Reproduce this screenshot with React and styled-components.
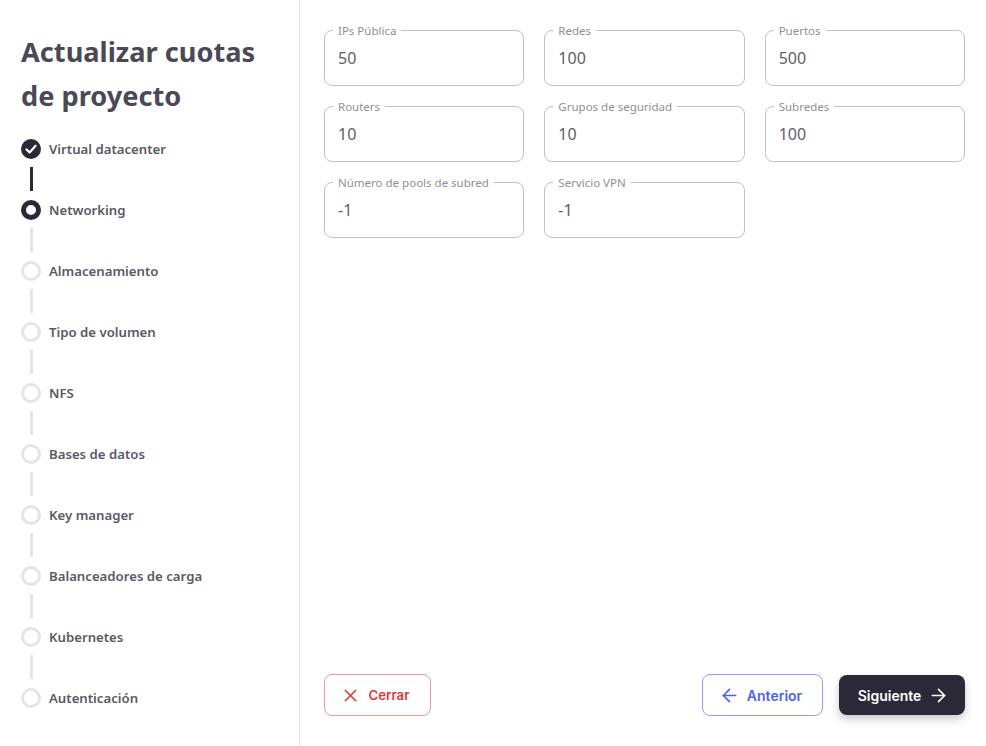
import React from "react";
import styled, { createGlobalStyle } from "styled-components";
import { ArrowLeft, ArrowRight, X } from "lucide-react";

const GlobalStyle = createGlobalStyle`
  html, body {
    margin: 0;
    padding: 0;
    background: #fff;
    font-family: "Noto Sans", sans-serif;
  }
  * {
    box-sizing: border-box;
  }
`;

const Page = styled.div`
  display: flex;
  width: 986px;
  height: 746px;
  overflow: hidden;
`;

const Sidebar = styled.aside`
  width: 300px;
  flex-shrink: 0;
  padding: 30px 0 0 21px;
  border-right: 1px solid #e5e5e7;
`;

const Title = styled.h1`
  margin: 0 0 21px;
  width: 260px;
  font-size: 27.2px;
  line-height: 44px;
  font-weight: 700;
  color: #4a4955;
`;

const StepList = styled.div`
  display: flex;
  flex-direction: column;
`;

const Step = styled.div`
  display: flex;
  align-items: center;
  gap: 8px;
  height: 20px;
  font-size: 13.2px;
  font-weight: 600;
  color: #5a5964;
`;

const Circle = styled.span`
  display: flex;
  align-items: center;
  justify-content: center;
  width: 20px;
  height: 20px;
  border-radius: 50%;
  background: ${({ $state }) => ($state === "done" ? "#2b2937" : "#fff")};
  border: ${({ $state }) =>
    $state === "active"
      ? "5px solid #2b2937"
      : $state === "done"
        ? "none"
        : "3px solid #e5e5e7"};
`;

const Connector = styled.span`
  width: 3px;
  height: 24px;
  margin: 8px 0 9px 9px;
  background: ${({ $done }) => ($done ? "#2b2937" : "#e5e5e7")};
`;

const Main = styled.main`
  flex: 1;
  display: flex;
  flex-direction: column;
  justify-content: space-between;
  padding: 24px 21px 30px 24px;
`;

const FieldGrid = styled.div`
  display: grid;
  grid-template-columns: repeat(3, 1fr);
  gap: 14px 20px;
`;

const Field = styled.fieldset`
  height: 62px;
  margin: 0;
  padding: 0 13px;
  border: 1px solid #c2c2c6;
  border-radius: 8px;
  min-width: 0;
`;

const FieldLabel = styled.legend`
  height: 12px;
  padding: 0 5px;
  margin-left: -5px;
  font-size: 11.5px;
  line-height: 14px;
  color: #8f8f95;
`;

const Input = styled.input`
  display: block;
  width: 100%;
  height: 40px;
  margin-top: 2px;
  padding: 0;
  border: none;
  outline: none;
  background: transparent;
  font-family: "Noto Sans", sans-serif;
  font-size: 16px;
  color: #5f5e68;
`;

const Footer = styled.div`
  display: flex;
  align-items: center;
  justify-content: space-between;
`;

const FooterRight = styled.div`
  display: flex;
  align-items: center;
  gap: 16px;
`;

const Button = styled.button`
  display: flex;
  align-items: center;
  justify-content: center;
  gap: ${({ $gap }) => $gap}px;
  width: ${({ $width }) => $width}px;
  height: ${({ $height }) => $height || 42}px;
  padding: ${({ $padding }) => $padding};
  border-radius: 8px;
  background: ${({ $bg }) => $bg || "#fff"};
  border: ${({ $border }) => ($border ? `1px solid ${$border}` : "none")};
  box-shadow: ${({ $shadow }) =>
    $shadow ? "0 4px 8px rgba(43, 41, 55, 0.25)" : "none"};
  color: ${({ $color }) => $color};
  font-family: Inter, sans-serif;
  font-size: ${({ $fontSize }) => $fontSize || 14}px;
  font-weight: 600;
`;

const fields = [
  ["IPs Pública", "50"],
  ["Redes", "100"],
  ["Puertos", "500"],
  ["Routers", "10"],
  ["Grupos de seguridad", "10"],
  ["Subredes", "100"],
  ["Número de pools de subred", "-1"],
  ["Servicio VPN", "-1"],
];

const steps = [
  "Virtual datacenter",
  "Networking",
  "Almacenamiento",
  "Tipo de volumen",
  "NFS",
  "Bases de datos",
  "Key manager",
  "Balanceadores de carga",
  "Kubernetes",
  "Autenticación",
];

function CheckMark() {
  return (
    <svg width="14" height="14" viewBox="0 0 14 14" fill="none">
      <path
        d="M2.5 7.5 L5.6 10.4 L11.6 3.8"
        stroke="#fff"
        strokeWidth="2.2"
        strokeLinecap="round"
        strokeLinejoin="round"
      />
    </svg>
  );
}

function stateOf(i) {
  if (i === 0) return "done";
  if (i === 1) return "active";
  return "todo";
}

export default function App() {
  return (
    <Page>
      <GlobalStyle />
      <Sidebar>
        <Title>Actualizar cuotas de proyecto</Title>
        <StepList>
          {steps.map((name, i) => (
            <React.Fragment key={name}>
              <Step>
                <Circle $state={stateOf(i)}>
                  {i === 0 && <CheckMark />}
                </Circle>
                {name}
              </Step>
              {i < steps.length - 1 && <Connector $done={i === 0} />}
            </React.Fragment>
          ))}
        </StepList>
      </Sidebar>
      <Main>
        <FieldGrid>
          {fields.map(([label, value]) => (
            <Field key={label}>
              <FieldLabel>{label}</FieldLabel>
              <Input defaultValue={value} />
            </Field>
          ))}
        </FieldGrid>
        <Footer>
          <Button
            $width={107}
            $gap={8}
            $padding="0 6px 0 0"
            $fontSize={13.2}
            $border="#ec9a9a"
            $color="#dc3a3a"
          >
            <X size={21} strokeWidth={1.8} />
            Cerrar
          </Button>
          <FooterRight>
            <Button
              $width={121}
              $gap={7}
              $padding="0 4px 0 0"
              $border="#8f9dfb"
              $color="#4c62f5"
            >
              <ArrowLeft size={21} strokeWidth={1.9} />
              Anterior
            </Button>
            <Button
              $width={126}
              $height={40}
              $gap={7}
              $padding="0 0 0 3px"
              $bg="#2b2937"
              $color="#fff"
              $shadow
            >
              Siguiente
              <ArrowRight size={21} strokeWidth={1.9} />
            </Button>
          </FooterRight>
        </Footer>
      </Main>
    </Page>
  );
}
